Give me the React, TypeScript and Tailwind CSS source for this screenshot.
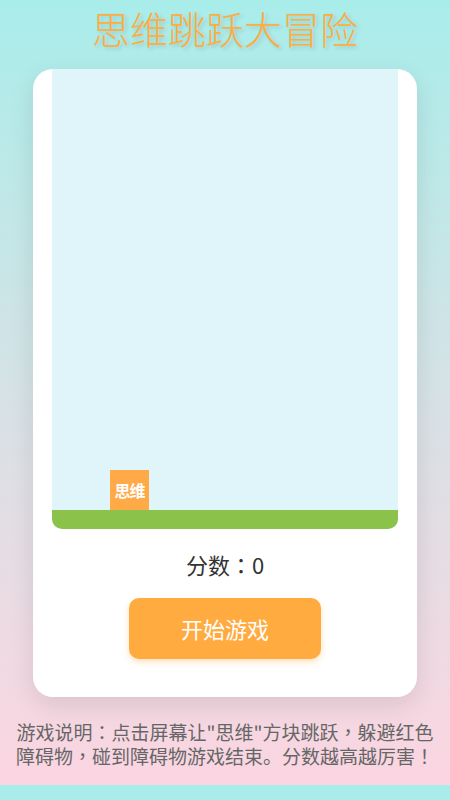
const Punct = ({ children }: { children: React.ReactNode }) => (
  <span className="font-['Noto_Sans_CJK_TC',sans-serif]">{children}</span>
);

export default function App() {
  return (
    <div className="w-[450px] bg-[#a8edea] font-['Noto_Sans_CJK_SC','Noto_Sans',sans-serif]">
      <div className="flex h-[785px] flex-col items-center bg-gradient-to-b from-[#a8edea] to-[#fbd5e1]">
        <h1 className="pt-[5px] text-center text-[38px] leading-[46px] font-light text-[#ffad42] [text-shadow:2px_2px_4px_rgba(0,0,0,0.15)]">
          思维跳跃大冒险
        </h1>

        <main className="mt-[18px] flex w-[384px] flex-col items-center rounded-[20px] bg-white px-[19px] pb-[38px] shadow-[0_8px_24px_rgba(0,0,0,0.1)]">
          <GameArea />

          <p className="mt-[20px] text-[22px] leading-[30px] text-[#333]">
            分数<Punct>：</Punct>0
          </p>

          <button
            type="button"
            className="mt-[19px] h-[61px] w-[192px] rounded-[10px] bg-[#ffab40] text-[22px] text-white shadow-[0_3px_6px_rgba(255,171,64,0.35)]"
          >
            开始游戏
          </button>
        </main>

        <p className="mt-[23px] px-[10px] text-center text-[19px] leading-[24px] text-[#666]">
          <span className="block whitespace-nowrap">
            游戏说明<Punct>：</Punct>点击屏幕让"思维"方块跳跃<Punct>，</Punct>躲避红色
          </span>
          <span className="block whitespace-nowrap">
            障碍物<Punct>，</Punct>碰到障碍物游戏结束。分数越高越厉害<Punct>！</Punct>
          </span>
        </p>
      </div>
      <div className="h-[15px]" />
    </div>
  );
}

function GameArea() {
  return (
    <div className="relative h-[460px] w-full overflow-hidden rounded-b-[10px] bg-[#e0f5f9]">
      <div className="absolute bottom-[19px] left-[58px] flex h-[40px] w-[39px] items-center justify-center bg-[#ffa947] text-[16px] leading-none font-bold tracking-[-1px] text-white">
        思维
      </div>
      <div className="absolute right-0 bottom-0 left-0 h-[19px] bg-[#8bc34a]" />
    </div>
  );
}
